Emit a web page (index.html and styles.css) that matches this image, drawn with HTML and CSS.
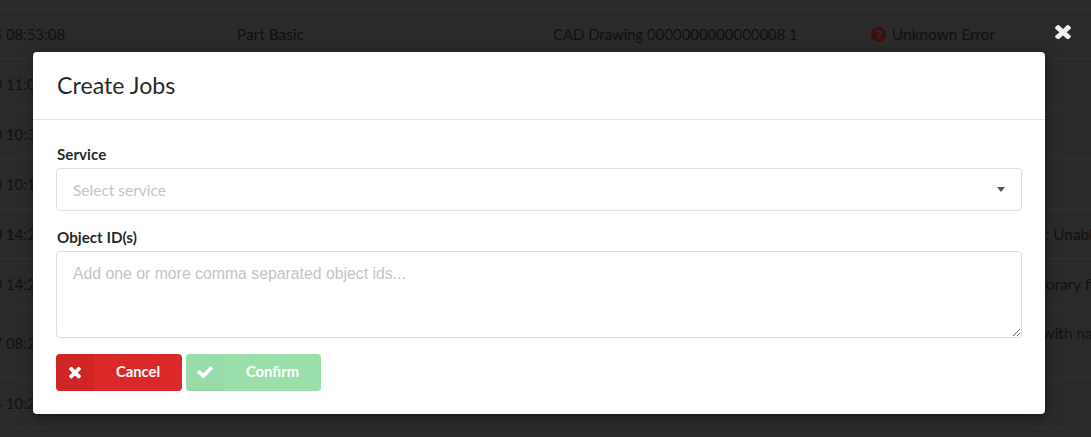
FILE: index.html
```html
<!DOCTYPE html>
<html lang="en">
<head>
    <meta charset="UTF-8">
    <meta name="viewport" content="width=device-width, initial-scale=1.0">
    <title>Create Jobs</title>
    <link rel="stylesheet" href="styles.css">
</head>
<body>
    <svg class="icon-defs">
        <symbol id="icon-question" viewBox="128 128 1536 1536"><path d="M1024 1376v-192q0-14-9-23t-23-9h-192q-14 0-23 9t-9 23v192q0 14 9 23t23 9h192q14 0 23-9t9-23zm256-672q0-88-55.5-163t-138.5-116-170-41q-243 0-371 213-15 24 8 42l132 100q7 6 19 6 16 0 25-12 53-68 86-92 34-24 86-24 48 0 85.5 26t37.5 59q0 38-20 61t-68 45q-63 28-115.5 86.5t-52.5 125.5v36q0 14 9 23t23 9h192q14 0 23-9t9-23q0-19 21.5-49.5t54.5-49.5q32-18 49-28.5t46-35 44.5-48 28-60.5 12.5-81zm384 192q0 209-103 385.5t-279.5 279.5-385.5 103-385.5-103-279.5-279.5-103-385.5 103-385.5 279.5-279.5 385.5-103 385.5 103 279.5 279.5 103 385.5z"/></symbol>
        <symbol id="icon-times" viewBox="0 0 1792 1792"><path d="M1490 1322q0 40-28 68l-136 136q-28 28-68 28t-68-28l-294-294-294 294q-28 28-68 28t-68-28l-136-136q-28-28-28-68t28-68l294-294-294-294q-28-28-28-68t28-68l136-136q28-28 68-28t68 28l294 294 294-294q28-28 68-28t68 28l136 136q28 28 28 68t-28 68l-294 294 294 294q28 28 28 68z"/></symbol>
        <symbol id="icon-check" viewBox="0 0 1792 1792"><path d="M1671 566q0 40-28 68l-724 724-136 136q-28 28-68 28t-68-28l-136-136-362-362q-28-28-28-68t28-68l136-136q28-28 68-28t68 28l294 295 656-657q28-28 68-28t68 28l136 136q28 28 28 68z"/></symbol>
    </svg>

    <div class="jobs-table">
        <div class="row">
            <div class="cell cell-date">2019-10-14 08:53:08</div>
            <div class="cell cell-type">Part Basic</div>
            <div class="cell cell-object">CAD Drawing 0000000000000008 1</div>
            <div class="cell cell-status"><svg class="status-icon"><use href="#icon-question"/></svg>Unknown Error</div>
        </div>
        <div class="row"><div class="cell cell-date">2019-10-10 11:05:12</div></div>
        <div class="row"><div class="cell cell-date">2019-10-10 10:38:40</div></div>
        <div class="row"><div class="cell cell-date">2019-10-10 10:14:21</div></div>
        <div class="row">
            <div class="cell cell-date">2019-10-10 14:25:33</div>
            <div class="cell cell-type"></div>
            <div class="cell cell-object"></div>
            <div class="cell cell-status"><svg class="status-icon"><use href="#icon-question"/></svg>Failed to open drawing: Unable to convert</div>
        </div>
        <div class="row">
            <div class="cell cell-date">2019-10-10 14:22:09</div>
            <div class="cell cell-type"></div>
            <div class="cell cell-object"></div>
            <div class="cell cell-status"><svg class="status-icon"><use href="#icon-question"/></svg>Failed to create a temporary file</div>
        </div>
        <div class="row row-tall">
            <div class="cell cell-date">2019-10-07 08:25:47</div>
            <div class="cell cell-type"></div>
            <div class="cell cell-object"></div>
            <div class="cell cell-status"><svg class="status-icon"><use href="#icon-question"/></svg>Could not find the file with name<br>part</div>
        </div>
        <div class="row"><div class="cell cell-date">2019-10-04 10:27:15</div></div>
    </div>

    <div class="dimmer">
        <svg class="close-icon" viewBox="302 282 1188 1244" preserveAspectRatio="none"><use href="#icon-times" width="1792" height="1792"/></svg>
        <div class="modal">
            <div class="modal-header">Create Jobs</div>
            <form class="modal-content">
                <div class="form-group">
                    <label class="field-label">Service</label>
                    <div class="dropdown">
                        <span class="dropdown-text">Select service</span>
                        <span class="dropdown-arrow"></span>
                    </div>
                </div>
                <div class="form-group form-group-ids">
                    <label class="field-label" for="objectIds">Object ID(s)</label>
                    <textarea id="objectIds" class="ids-input" placeholder="Add one or more comma separated object ids..."></textarea>
                </div>
                <div class="button-group">
                    <button type="button" class="btn btn-cancel">
                        <span class="btn-icon"><svg><use href="#icon-times"/></svg></span>
                        <span class="btn-label">Cancel</span>
                    </button>
                    <button type="button" class="btn btn-confirm" disabled>
                        <span class="btn-icon"><svg><use href="#icon-check"/></svg></span>
                        <span class="btn-label">Confirm</span>
                    </button>
                </div>
            </form>
        </div>
    </div>
</body>
</html>
```

FILE: styles.css
```css
html, body {
    height: 100%;
}
body {
    margin: 0;
    overflow: hidden;
    position: relative;
    background-color: #2a2a2a;
    font-family: Lato, sans-serif;
    font-size: 15.4px;
    color: #111;
}
.icon-defs {
    display: none;
}
.jobs-table {
    padding-top: 8px;
    border-bottom: 1px solid #303030;
}
.row {
    display: flex;
    align-items: center;
    height: 50px;
    box-sizing: border-box;
    border-top: 1px solid #303030;
    white-space: nowrap;
}
.row-tall {
    height: 69px;
}
.cell-date {
    flex: none;
    width: 315px;
    margin-left: -78px;
    font-size: 14.9px;
}
.cell-type {
    flex: none;
    width: 316px;
}
.cell-object {
    flex: none;
    width: 317px;
    font-size: 14.9px;
}
.cell-status {
    line-height: 20px;
}
.status-icon {
    width: 15px;
    height: 15px;
    fill: #430c0c;
    vertical-align: -2px;
    margin-left: 1px;
    margin-right: 6px;
}
.dimmer {
    position: absolute;
    top: 0;
    left: 0;
    right: 0;
    bottom: 0;
}
.close-icon {
    position: absolute;
    top: 24px;
    left: 1055px;
    width: 16px;
    height: 15px;
    fill: #f2f2f2;
}
.modal {
    position: absolute;
    top: 52px;
    left: 33px;
    width: 1012px;
    background-color: #fff;
    border-radius: 4px;
    box-shadow: 1px 3px 3px 0 rgba(0,0,0,0.2), 1px 3px 15px 2px rgba(0,0,0,0.2);
    color: rgba(0,0,0,0.87);
}
.modal-header {
    height: 67px;
    padding: 0 23px 0 24px;
    line-height: 66px;
    font-size: 23.2px;
    font-weight: 400;
    border-bottom: 1px solid #e2e2e2;
}
.modal-content {
    padding: 26px 23px 23px;
}
.form-group {
    margin-bottom: 18px;
}
.form-group-ids {
    margin-bottom: 16px;
}
.field-label {
    display: block;
    padding-left: 1px;
    font-size: 15.2px;
    font-weight: 700;
    line-height: 17px;
    margin-bottom: 5px;
}
.dropdown {
    display: flex;
    align-items: center;
    justify-content: space-between;
    height: 43px;
    box-sizing: border-box;
    padding: 0 16px;
    border: 1px solid #dedede;
    border-radius: 4px;
}
.dropdown-text {
    font-size: 15.5px;
    color: #c4c4c4;
}
.dropdown-arrow {
    width: 0;
    height: 0;
    border-left: 4.5px solid transparent;
    border-right: 4.5px solid transparent;
    border-top: 5px solid #555;
}
.ids-input {
    display: block;
    width: 100%;
    height: 87px;
    box-sizing: border-box;
    padding: 12px 16px;
    border: 1px solid #dedede;
    border-radius: 4px;
    outline: none;
    font-family: "Liberation Sans", Arial, sans-serif;
    font-size: 15.8px;
    line-height: 19px;
}
.ids-input::placeholder {
    color: #c4c4c4;
}
.button-group {
    display: flex;
    gap: 4px;
}
.btn {
    display: flex;
    align-items: stretch;
    height: 37px;
    padding: 0;
    border: none;
    border-radius: 4px;
    overflow: hidden;
    font-family: Lato, sans-serif;
    font-size: 14.8px;
    font-weight: 700;
    color: #fff;
}
.btn-icon {
    flex: none;
    display: flex;
    align-items: center;
    justify-content: center;
    width: 38px;
    padding-bottom: 1px;
    box-sizing: border-box;
    background-color: rgba(0,0,0,0.05);
}
.btn-icon svg {
    width: 18px;
    height: 18px;
    fill: #fff;
}
.btn-label {
    flex: 1;
    align-self: center;
    padding-bottom: 3px;
    text-align: center;
}
.btn-cancel {
    width: 126px;
    background-color: #db2828;
}
.btn-confirm {
    width: 135px;
    background-color: #21ba45;
    opacity: 0.45;
}
```
